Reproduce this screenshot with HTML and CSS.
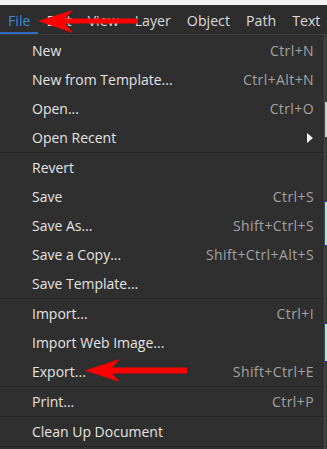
FILE: index.html
```html
<!DOCTYPE html>
<html lang="en">
  <head>
    <meta charset="UTF-8" />
    <meta name="viewport" content="width=device-width, initial-scale=1.0" />
    <title>File menu</title>
    <link rel="stylesheet" href="styles.css">
  </head>
  <body>
    <div class="titleBar"></div>
    <nav class="menuBar">
      <span class="menuBarItem active">File</span>
      <span class="menuBarItem">Edit</span>
      <span class="menuBarItem">View</span>
      <span class="menuBarItem">Layer</span>
      <span class="menuBarItem">Object</span>
      <span class="menuBarItem">Path</span>
      <span class="menuBarItem">Text</span>
    </nav>
    <div class="workArea">
      <ul class="fileMenu">
        <li class="menuItem"><span>New</span><span class="shortcut">Ctrl+N</span></li>
        <li class="menuItem"><span>New from Template...</span><span class="shortcut">Ctrl+Alt+N</span></li>
        <li class="menuItem"><span>Open...</span><span class="shortcut">Ctrl+O</span></li>
        <li class="menuItem">
          <span>Open Recent</span>
          <svg class="subArrow" width="6" height="10" viewBox="0 0 6 10"><polygon points="0,0 6,5 0,10" fill="#f2f2f2" /></svg>
        </li>
        <li class="separator"></li>
        <li class="menuItem"><span>Revert</span></li>
        <li class="menuItem"><span>Save</span><span class="shortcut">Ctrl+S</span></li>
        <li class="menuItem"><span>Save As...</span><span class="shortcut">Shift+Ctrl+S</span></li>
        <li class="menuItem"><span>Save a Copy...</span><span class="shortcut">Shift+Ctrl+Alt+S</span></li>
        <li class="menuItem"><span>Save Template...</span></li>
        <li class="separator"></li>
        <li class="menuItem"><span>Import...</span><span class="shortcut">Ctrl+I</span></li>
        <li class="menuItem"><span>Import Web Image...</span></li>
        <li class="menuItem"><span>Export...</span><span class="shortcut">Shift+Ctrl+E</span></li>
        <li class="separator"></li>
        <li class="menuItem"><span>Print...</span><span class="shortcut">Ctrl+P</span></li>
        <li class="separator"></li>
        <li class="menuItem"><span>Clean Up Document</span></li>
        <li class="separator"></li>
      </ul>
      <div class="canvasEdge">
        <div class="edgeDark" style="height: 68px"></div>
        <div class="edgeLight" style="height: 35px"></div>
        <div class="edgeDark" style="height: 64px"></div>
        <div class="edgeCanvas" style="height: 45px"></div>
        <div class="edgeDark" style="height: 77px"></div>
        <div class="edgeCanvas" style="height: 39px"></div>
        <div class="edgeDark grow"></div>
      </div>
    </div>
    <svg class="callouts" width="327" height="449" viewBox="0 0 327 449">
      <polygon points="38,21 73,10 65,18.5 138,18.5 138,23.5 65,23.5 73,33" fill="#ff0000" />
      <polygon points="85,370.5 120,359 112,367.5 187,367.5 187,373.5 112,373.5 120,382" fill="#ff0000" />
    </svg>
  </body>
</html>
```

FILE: styles.css
```css
body {
  margin: 0;
  background-color: #2d2d2d;
  font-family: "Open Sans", sans-serif;
  overflow: hidden;
}
.titleBar {
  height: 5px;
  background: #f2f2f2;
}
.menuBar {
  display: flex;
  height: 29px;
  background: #2d2d2d;
  font-size: 14.2px;
  color: #dcdcdc;
}
.menuBarItem {
  padding: 4px 8px 0;
  height: 29px;
  line-height: 23px;
  box-sizing: border-box;
}
.menuBarItem.active {
  color: #3f86da;
  border-bottom: 2px solid #2e6cc0;
}
.workArea {
  display: flex;
}
.fileMenu {
  list-style: none;
  margin: 0;
  padding: 1px 0 0;
  width: 324px;
  background: #2f2f2f;
  border-top: 1px solid #3c3c3c;
  border-right: 1px solid #474747;
  font-size: 14px;
  color: #e4e4e4;
}
.menuItem {
  display: flex;
  align-items: center;
  justify-content: space-between;
  height: 29px;
  padding: 0 10px 0 32px;
}
.shortcut {
  color: #a3a3a3;
  letter-spacing: 0.4px;
}
.subArrow {
  margin-right: 1px;
}
.separator {
  height: 1px;
  background: #262626;
}
.canvasEdge {
  flex: 1;
  display: flex;
  flex-direction: column;
  height: 415px;
}
.edgeDark {
  background: #3a3a3a;
}
.edgeLight {
  background: #cfcfcf;
}
.edgeCanvas {
  background: #b0e4e4;
  border-top: 1px solid #2020d0;
  border-bottom: 1px solid #2020d0;
  box-sizing: border-box;
}
.grow {
  flex: 1;
}
.callouts {
  position: absolute;
  top: 0;
  left: 0;
  pointer-events: none;
}
```
